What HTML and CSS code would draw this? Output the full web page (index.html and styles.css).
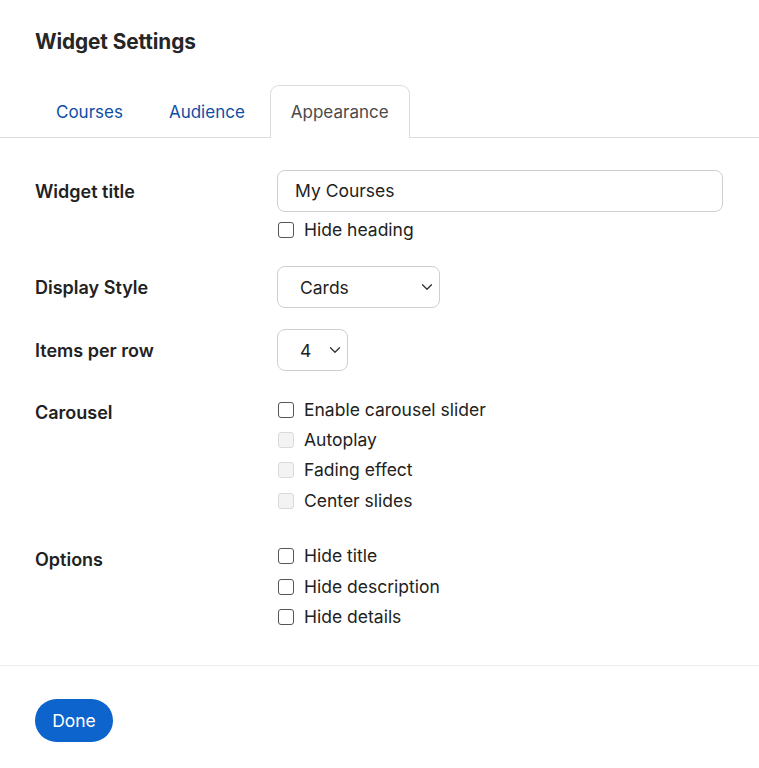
FILE: index.html
```html
<!DOCTYPE html>
<html>
<head>
<meta charset="utf-8">
<link rel="stylesheet" href="styles.css">
</head>
<body>
<div class="dialog">
  <header class="header">
    <h1 class="title">Widget Settings</h1>
  </header>
  <nav class="tabs">
    <a class="tab">Courses</a>
    <a class="tab">Audience</a>
    <a class="tab active">Appearance</a>
  </nav>
  <main class="body">
    <div class="row">
      <div class="label">Widget title</div>
      <div class="field">
        <div class="input">My Courses</div>
        <label class="check first"><span class="box"></span>Hide heading</label>
      </div>
    </div>
    <div class="row">
      <div class="label">Display Style</div>
      <div class="field">
        <div class="select wide"><span>Cards</span><svg class="chev" width="12" height="8" viewBox="0 0 12 8"><path d="M1.5 1.8 L6 6.2 L10.5 1.8" fill="none" stroke="#333" stroke-width="1.3" stroke-linecap="round" stroke-linejoin="round"/></svg></div>
      </div>
    </div>
    <div class="row before-group">
      <div class="label">Items per row</div>
      <div class="field">
        <div class="select narrow"><span>4</span><svg class="chev" width="12" height="8" viewBox="0 0 12 8"><path d="M1.5 1.8 L6 6.2 L10.5 1.8" fill="none" stroke="#333" stroke-width="1.3" stroke-linecap="round" stroke-linejoin="round"/></svg></div>
      </div>
    </div>
    <div class="row group">
      <div class="label">Carousel</div>
      <div class="field list">
        <label class="check"><span class="box"></span>Enable carousel slider</label>
        <label class="check"><span class="box disabled"></span>Autoplay</label>
        <label class="check"><span class="box disabled"></span>Fading effect</label>
        <label class="check"><span class="box disabled"></span>Center slides</label>
      </div>
    </div>
    <div class="row group last">
      <div class="label">Options</div>
      <div class="field list">
        <label class="check"><span class="box"></span>Hide title</label>
        <label class="check"><span class="box"></span>Hide description</label>
        <label class="check"><span class="box"></span>Hide details</label>
      </div>
    </div>
  </main>
  <footer class="footer">
    <button class="btn">Done</button>
  </footer>
</div>
</body>
</html>
```
FILE: styles.css
```css
* { box-sizing: border-box; }
html, body { margin: 0; padding: 0; background: #fff; }
body {
  font-family: Inter, "Noto Sans", "Liberation Sans", sans-serif;
  color: #1d2125;
  font-size: 17.5px;
}
.dialog { width: 759px; }
.header { padding: 29px 35px 0; }
.title {
  margin: 0;
  font-size: 20.8px;
  font-weight: 700;
  line-height: 26px;
  color: #262626;
  letter-spacing: -0.1px;
}
.tabs {
  margin-top: 30px;
  display: flex;
  gap: 4px;
  padding-left: 35px;
  border-bottom: 1px solid #dcdcdc;
}
.tab {
  display: block;
  height: 53px;
  padding: 13px 20px 0;
  line-height: 26px;
  font-size: 17px;
  color: #0d4ea6;
  border: 1px solid transparent;
  border-bottom: none;
  border-radius: 9px 9px 0 0;
  margin-bottom: -1px;
}
.tab.active {
  color: #4a4a4a;
  border-color: #dcdcdc;
  background: #fff;
}
.body { padding: 32px 35px 33px; }
.row {
  display: grid;
  grid-template-columns: 242px 1fr;
  margin-bottom: 21px;
}
.row.before-group { margin-bottom: 23px; }
.row.group { margin-bottom: 25px; }
.row.last { margin-bottom: 0; }
.label {
  font-weight: 600;
  font-size: 18px;
  line-height: 24px;
  padding-top: 9.5px;
  color: #222;
}
.row.group .label { padding-top: 7px; }
.field { display: flex; flex-direction: column; align-items: flex-start; }
.input {
  width: 446px;
  height: 42px;
  border: 1px solid #cfcfcf;
  border-radius: 8px;
  padding: 0 17px;
  line-height: 40px;
  color: #222;
}
.check {
  display: flex;
  align-items: center;
  height: 30.4px;
  line-height: 24px;
  color: #222;
}
.check.first { margin-top: 3px; }
.box {
  width: 16px;
  height: 16px;
  border: 1.3px solid #555;
  border-radius: 3px;
  margin: 0 10px 0 1px;
  flex: none;
  background: #fff;
}
.box.disabled {
  border-color: #dadada;
  background: #f3f3f3;
}
.select {
  height: 42px;
  border: 1px solid #cfcfcf;
  border-radius: 8px;
  display: flex;
  align-items: center;
  justify-content: space-between;
  padding: 0 6px 0 22px;
  color: #222;
}
.select.wide { width: 163px; }
.select.narrow { width: 71px; }
.chev { flex: none; }
.footer {
  border-top: 1px solid #ececec;
  padding: 33px 35px 26px;
}
.btn {
  font-family: inherit;
  font-size: 17.5px;
  color: #fff;
  background: #0c64cc;
  border: none;
  border-radius: 22px;
  height: 43px;
  width: 78px;
  padding: 0;
  line-height: 43px;
}
```
